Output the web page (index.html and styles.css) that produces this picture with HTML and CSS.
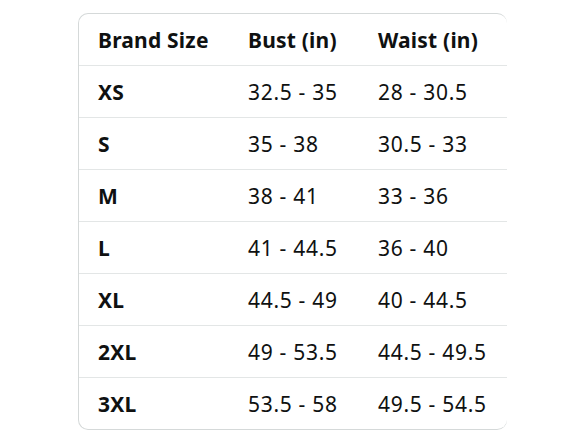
FILE: index.html
```html
<!DOCTYPE html>
<html>
<head>
<meta charset="utf-8">
<link rel="stylesheet" href="styles.css">
</head>
<body>
<div class="card">
  <div class="row head"><div class="cell">Brand Size</div><div class="cell">Bust (in)</div><div class="cell">Waist (in)</div></div>
  <div class="row"><div class="cell size">XS</div><div class="cell">32.5 - 35</div><div class="cell">28 - 30.5</div></div>
  <div class="row"><div class="cell size">S</div><div class="cell">35 - 38</div><div class="cell">30.5 - 33</div></div>
  <div class="row"><div class="cell size">M</div><div class="cell">38 - 41</div><div class="cell">33 - 36</div></div>
  <div class="row"><div class="cell size">L</div><div class="cell">41 - 44.5</div><div class="cell">36 - 40</div></div>
  <div class="row"><div class="cell size">XL</div><div class="cell">44.5 - 49</div><div class="cell">40 - 44.5</div></div>
  <div class="row"><div class="cell size">2XL</div><div class="cell">49 - 53.5</div><div class="cell">44.5 - 49.5</div></div>
  <div class="row last"><div class="cell size">3XL</div><div class="cell">53.5 - 58</div><div class="cell">49.5 - 54.5</div></div>
</div>
</body>
</html>
```
FILE: styles.css
```css
html, body { margin: 0; padding: 0; background: #fff; }
body {
  font-family: "Noto Sans", "Open Sans", sans-serif;
  color: #0f1111;
  padding-top: 13px;
}
.card {
  margin-left: 78px;
  width: 429px;
  border: 1px solid #d5d9d9;
  border-right: 0;
  border-radius: 10px;
  box-sizing: border-box;
}
.row {
  display: grid;
  grid-template-columns: 150px 130px 1fr;
  height: 52px;
  box-sizing: border-box;
  align-items: center;
  border-bottom: 1px solid #e3e6e6;
}
.row.last { border-bottom: 0; height: 51px; }
.cell {
  padding-left: 19px;
  font-size: 21px;
  letter-spacing: 0.7px;
  white-space: nowrap;
}
.head .cell, .size { font-weight: 700; letter-spacing: 0.2px; }
```
